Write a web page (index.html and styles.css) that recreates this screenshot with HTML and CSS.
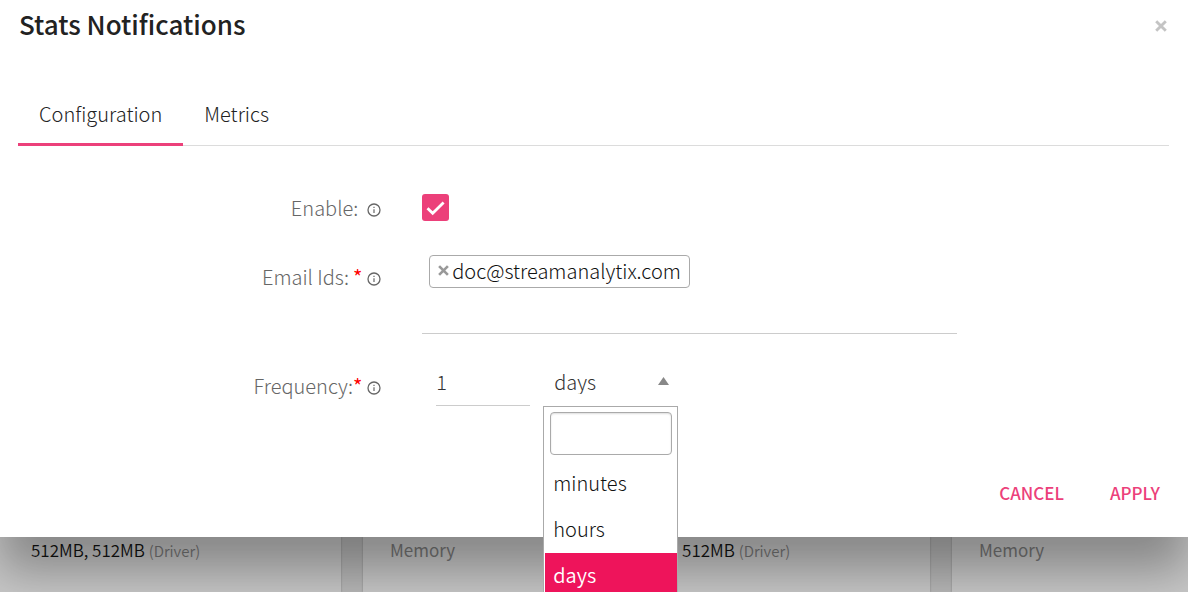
FILE: index.html
```html
<!DOCTYPE html>
<html lang="en">
<head>
<meta charset="utf-8">
<title>Stats Notifications</title>
<link rel="stylesheet" href="styles.css">
</head>
<body>
<svg class="defs" aria-hidden="true">
  <symbol id="info" viewBox="0 0 14 14">
    <circle cx="7" cy="7" r="6" fill="none" stroke="currentColor" stroke-width="1.3"/>
    <path d="M7 6.200v3.800M7 3.800v1.200" stroke="currentColor" stroke-width="1.200"/>
  </symbol>
  <symbol id="cross" viewBox="0 0 10 10">
    <path d="M1 1l8 8M9 1l-8 8" stroke="currentColor" stroke-width="2.400"/>
  </symbol>
</svg>
<main class="modal" role="dialog" aria-labelledby="title">
  <header class="modal-header">
    <h1 class="modal-title" id="title">Stats Notifications</h1>
    <button class="close" type="button" aria-label="Close"><svg class="close-icon"><use href="#cross"/></svg></button>
  </header>
  <nav class="tabs" role="tablist">
    <button class="tab active" type="button" role="tab" aria-selected="true">Configuration</button>
    <button class="tab" type="button" role="tab" aria-selected="false">Metrics</button>
  </nav>
  <form class="form">
    <div class="row">
      <label class="label" for="enable"><span class="label-text">Enable:</span><svg class="info"><use href="#info"/></svg></label>
      <div class="control"><input class="check" type="checkbox" id="enable" checked><svg class="tick" viewBox="0 0 27 27" aria-hidden="true"><path d="M5.500 14.200l5.200 5L21.600 8.600" fill="none" stroke="#fff" stroke-width="2.800"/></svg></div>
    </div>
    <div class="row">
      <label class="label low" for="email"><span class="label-text spaced">Email Ids:</span><span class="required">*</span><svg class="info"><use href="#info"/></svg></label>
      <div class="control tags">
        <span class="tag"><button class="tag-remove" type="button" aria-label="Remove"><svg class="tag-icon"><use href="#cross"/></svg></button>doc@streamanalytix.com</span>
        <input class="tag-input" id="email" type="text">
      </div>
    </div>
    <div class="row">
      <label class="label low" for="frequency"><span class="label-text">Frequency:</span><span class="required">*</span><svg class="info"><use href="#info"/></svg></label>
      <div class="control frequency">
        <input class="number" id="frequency" type="text" value="1">
        <div class="unit">
          <select class="select" aria-label="Frequency unit"><option>minutes</option><option>hours</option><option selected>days</option></select>
          <svg class="arrow" viewBox="0 0 11 8" aria-hidden="true"><path d="M5.500 0L11 8H0z" fill="#888"/></svg>
          <div class="dropdown">
            <input class="search" type="text" aria-label="Search units">
            <ul class="options" role="listbox" aria-label="Units">
              <li class="option" role="option">minutes</li>
              <li class="option" role="option">hours</li>
              <li class="option selected" role="option" aria-selected="true">days</li>
            </ul>
          </div>
        </div>
      </div>
    </div>
  </form>
  <footer class="actions">
    <button class="action" type="button">CANCEL</button>
    <button class="action" type="button">APPLY</button>
  </footer>
</main>
<section class="cards">
  <div class="card first"><span class="value">512MB, 512MB <small class="note">(Driver)</small></span></div>
  <div class="card"><span class="name">Memory</span><span class="value">512MB, 512MB <small class="note">(Driver)</small></span></div>
  <div class="card"><span class="name">Memory</span></div>
</section>
</body>
</html>
```
FILE: styles.css
```css
* { box-sizing: border-box; }
body {
  margin: 0;
  min-height: 100vh;
  display: flex;
  flex-direction: column;
  overflow: hidden;
  background: #b8b8b8;
  color: #222;
  font-family: "Noto Sans CJK SC", "Open Sans", sans-serif;
  font-size: 20px;
  line-height: 28px;
}
button, input, select { font: inherit; color: inherit; }
button { border: 0; padding: 0; background: none; }
.defs { position: absolute; width: 0; height: 0; }
.modal {
  position: relative;
  z-index: 1;
  background: #fff;
  padding: 6px 19px 29px;
  box-shadow: 0 34px 44px rgba(0, 0, 0, .32);
}
.modal-header { display: flex; justify-content: space-between; align-items: center; }
.modal-title { margin: 0; font-size: 26px; line-height: 36px; font-weight: 500; }
.close { display: flex; margin-top: 4px; padding: 2px; color: #c4c4c4; }
.close-icon { width: 12px; height: 12px; }
.tabs { display: flex; margin: 43px 0 0 -1px; border-bottom: 1px solid #dcdcdc; }
.tab { height: 61px; margin-bottom: -1px; padding: 0 21px; border-bottom: 3px solid transparent; font-weight: 300; }
.tab.active { border-color: #ec407a; }
.form { display: grid; gap: 34px; padding-top: 48px; font-weight: 300; }
.row { display: grid; grid-template-columns: 31.5% 46.5%; column-gap: 41px; align-items: start; min-height: 31px; }
.label { display: flex; justify-content: flex-end; align-items: center; height: 27px; color: #666; }
.label.low { margin-top: 4px; }
.label-text.spaced { margin-right: 4px; }
.required { color: #f00; font-weight: 400; }
.info { width: 14px; height: 14px; margin: 4px 0 0 5px; }
.label-text + .info { margin-left: 9px; }
.control { position: relative; }
.check { appearance: none; display: block; width: 27px; height: 27px; margin: 0; border-radius: 3px; background: #ec407a; }
.tick { position: absolute; top: 0; left: 0; width: 27px; height: 27px; pointer-events: none; }
.tags { display: flex; flex-wrap: wrap; margin-top: -4px; padding: 0 7px; border-bottom: 1px solid #ccc; }
.tag { display: flex; align-items: center; height: 33px; padding: 0 8px 2px; border: 1px solid #aaa; border-radius: 4px; color: #111; }
.tag-remove { display: flex; margin-right: 3px; color: #999; }
.tag-icon { width: 11px; height: 11px; }
.tag-input { width: 100%; height: 45px; border: 0; padding: 0; outline: 0; background: none; }
.frequency { display: flex; gap: 13px; padding-left: 14px; color: #333; }
.number { width: 94px; height: 38px; padding: 0 0 10px; border: 0; border-bottom: 1px solid #ccc; }
.unit { position: relative; width: 135px; }
.select { appearance: none; display: block; width: 100%; height: 26px; padding: 0 11px; border: 0; background: none; }
.arrow { position: absolute; right: 9px; top: 9px; width: 11px; height: 8px; pointer-events: none; }
.dropdown { position: absolute; top: 38px; left: 0; width: 100%; padding-top: 5px; border: 1px solid #aaa; background: #fff; color: #111; }
.search { display: block; width: 122px; height: 43px; margin: 0 auto 6px 6px; border: 1px solid #aaa; border-radius: 4px; box-shadow: inset 0 1px 2px #ddd; }
.options { list-style: none; margin: 0; padding: 0 0 0 1px; }
.option { height: 46px; padding: 8px; }
.option.selected { background: #ee145b; color: #fff; font-weight: 350; }
.actions { display: flex; justify-content: flex-end; gap: 46px; margin-top: 72px; padding-right: 9px; }
.action { font-size: 17px; line-height: 30px; font-weight: 500; color: #ec407a; }
.cards { display: grid; grid-template-columns: minmax(0, 341fr) minmax(0, 567fr) minmax(0, 236fr); flex: 1; gap: 22px; min-height: 55px; }
.card { display: flex; padding: 1px 0 0 27px; background: #c8c8c8; font-size: 17px; line-height: 24px; box-shadow: 0 0 2px #888; }
.card.first { padding-left: 31px; }
.name { width: 231px; color: #777; }
.value { color: #111; font-weight: 350; }
.note { font-size: 15px; color: #777; }
```
